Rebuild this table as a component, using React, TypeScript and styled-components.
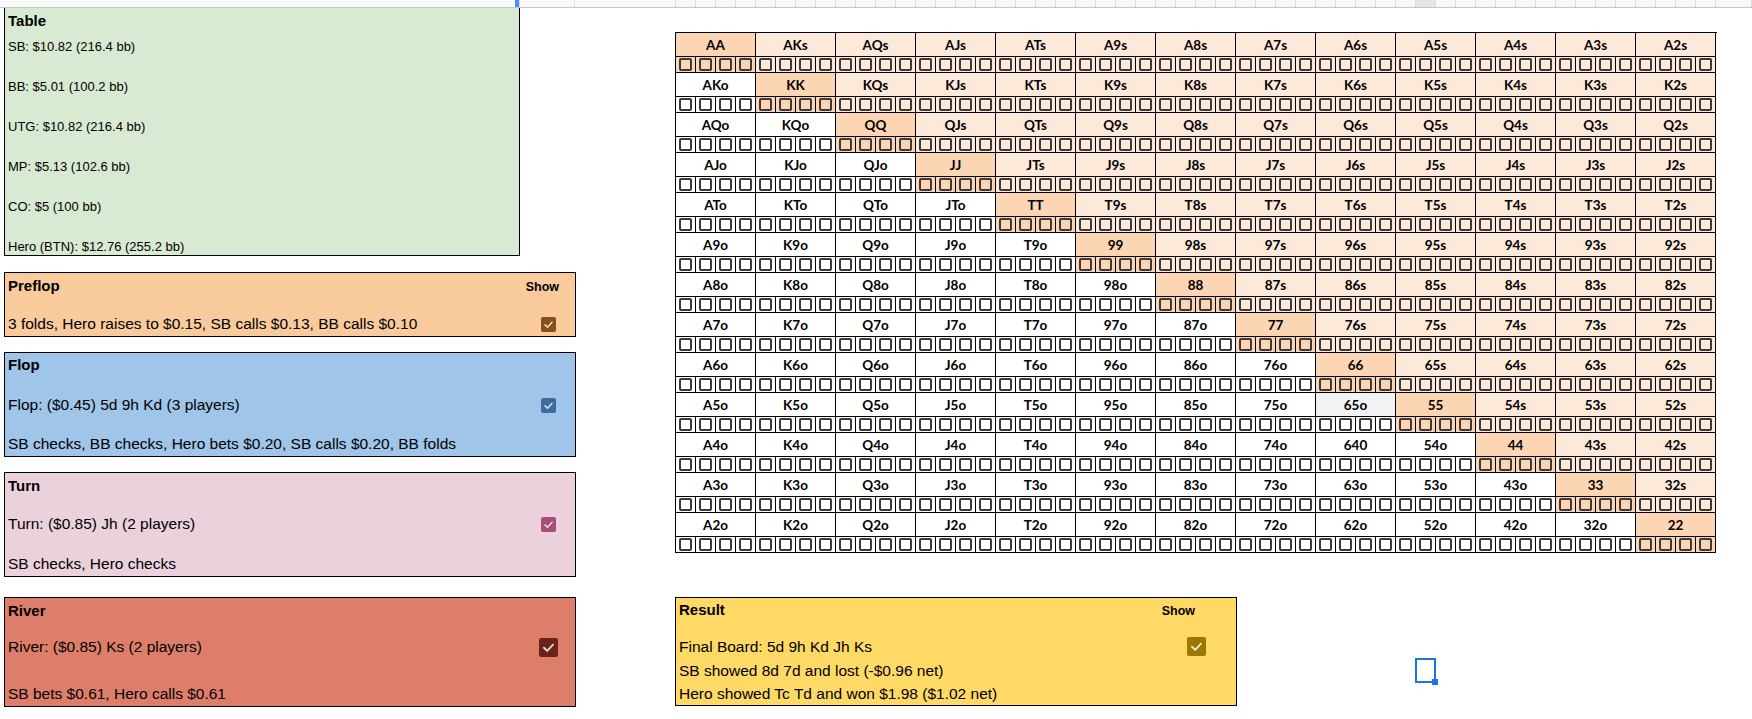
import React from "react";
import styled, { createGlobalStyle } from "styled-components";

const GlobalStyle = createGlobalStyle`
  html, body { margin: 0; padding: 0; background: #fff; overflow: hidden; }
  body { font-family: "Liberation Sans", Arial, sans-serif; color: #000; }
  #root { width: 1752px; height: 719px; }
`;

const Page = styled.div`
  width: 1752px;
  height: 719px;
  position: relative;
  overflow: hidden;
`;

/* ---------- column header strip ---------- */
const HeaderStrip = styled.div`
  display: flex;
  height: 7px;
  background: #f8f9fa;
  border-bottom: 1px solid #c4c7c5;
`;

const HeadCell = styled.div<{ $w?: number; $active?: boolean; $marker?: boolean }>`
  flex: ${(p) => (p.$w ? `0 0 ${p.$w}px` : "1 1 auto")};
  box-sizing: border-box;
  border-right: 1px solid #dadce0;
  background: ${(p) => (p.$active ? "#e3e5e8" : "transparent")};
  position: relative;
  &::after {
    content: "";
    display: ${(p) => (p.$marker ? "block" : "none")};
    position: absolute;
    right: 0;
    top: 0;
    bottom: 0;
    width: 4px;
    background: #4d8ef7;
  }
`;

/* ---------- sheet body ---------- */
const SheetBody = styled.div`
  display: flex;
  align-items: flex-start;
`;

const LeftCol = styled.div`
  display: flex;
  flex-direction: column;
  padding-left: 4px;
`;

const RightCol = styled.div`
  display: flex;
  flex-direction: column;
  margin-left: 99px;
  margin-top: 24px;
`;

const Panel = styled.div<{ $bg: string; $w: number; $h: number; $mt?: number; $noTop?: boolean }>`
  box-sizing: border-box;
  width: ${(p) => p.$w}px;
  height: ${(p) => p.$h}px;
  margin-top: ${(p) => p.$mt ?? 0}px;
  background: ${(p) => p.$bg};
  border: 1px solid #000;
  border-top: ${(p) => (p.$noTop ? "none" : "1px solid #000")};
  display: flex;
  flex-direction: column;
  padding-left: 3px;
`;

const Row = styled.div<{ $h: number; $mt?: number }>`
  display: flex;
  align-items: center;
  justify-content: space-between;
  height: ${(p) => p.$h}px;
  margin-top: ${(p) => p.$mt ?? 0}px;
  flex: 0 0 auto;
`;

const Title = styled.span`
  font-weight: bold;
  font-size: 15px;
`;

const BodyText = styled.span`
  font-size: 15.5px;
  white-space: nowrap;
`;

const SmallLine = styled.div<{ $mt: number }>`
  font-size: 13px;
  line-height: 15px;
  height: 15px;
  margin-top: ${(p) => p.$mt}px;
  white-space: nowrap;
`;

const ShowLabel = styled.span<{ $mr: number }>`
  font-weight: bold;
  font-size: 12.5px;
  margin-right: ${(p) => p.$mr}px;
  padding-top: 3px;
`;

const CheckBox = styled.span<{ $color: string; $size: number; $mr: number }>`
  display: inline-flex;
  align-items: center;
  justify-content: center;
  width: ${(p) => p.$size}px;
  height: ${(p) => p.$size}px;
  border-radius: 2px;
  background: ${(p) => p.$color};
  margin-right: ${(p) => p.$mr}px;
  flex: 0 0 auto;
`;

const Check: React.FC<{ color: string; size: number; mr: number }> = ({ color, size, mr }) => (
  <CheckBox $color={color} $size={size} $mr={mr}>
    <svg width={size} height={size} viewBox="0 0 16 16">
      <polyline
        points="4.2,8.2 6.9,10.9 11.8,5.6"
        fill="none"
        stroke="rgba(255,255,255,0.82)"
        strokeWidth="1.6"
        strokeLinecap="round"
        strokeLinejoin="round"
      />
    </svg>
  </CheckBox>
);

/* ---------- hand grid ---------- */
const HandGrid = styled.div`
  display: grid;
  grid-template-columns: repeat(13, 80px);
  border-left: 1px solid #000;
  border-top: 1px solid #000;
  width: 1041px;
`;

const HandCell = styled.div`
  box-sizing: border-box;
  width: 80px;
  height: 40px;
  border-right: 1px solid #000;
  border-bottom: 1px solid #000;
  display: flex;
  flex-direction: column;
`;

const HandLabel = styled.div<{ $bg: string }>`
  height: 23px;
  border-bottom: 1px solid #000;
  background: ${(p) => p.$bg};
  display: flex;
  align-items: center;
  justify-content: center;
  font-family: Lato, "Open Sans", sans-serif;
  font-weight: 700;
  font-size: 13.5px;
  color: #000;
`;

const CheckRow = styled.div<{ $bg: string }>`
  height: 15px;
  display: grid;
  grid-template-columns: 20px 20px 20px 19px;
  background: ${(p) => p.$bg};
`;

const Sub = styled.div<{ $last?: boolean }>`
  box-sizing: border-box;
  border-right: ${(p) => (p.$last ? "none" : "1px solid #000")};
  display: flex;
  align-items: center;
  justify-content: center;
`;

const Square = styled.span`
  box-sizing: border-box;
  width: 13px;
  height: 13px;
  border: 2px solid #3b3b3b;
  border-radius: 2px;
`;

const Selection = styled.div`
  position: absolute;
  left: 1415px;
  top: 658px;
  width: 21px;
  height: 25px;
  box-sizing: border-box;
  border: 2px solid #1a73e8;
  &::after {
    content: "";
    position: absolute;
    right: -4px;
    bottom: -4px;
    width: 6px;
    height: 6px;
    background: #1a73e8;
  }
`;

const RANKS = "AKQJT98765432".split("");
const PAIR = "#fcd5b4";
const SUITED = "#fde9d9";

type Hand = { label: string; bg: string; rowBg: string };

const hands: Hand[] = [];
RANKS.forEach((ri, i) => {
  RANKS.forEach((rj, j) => {
    let label: string;
    let bg: string;
    let rowBg: string;
    if (i === j) {
      label = ri + rj;
      bg = PAIR;
      rowBg = PAIR;
    } else if (j > i) {
      label = ri + rj + "s";
      bg = SUITED;
      rowBg = SUITED;
    } else {
      label = rj + ri + "o";
      bg = "#ffffff";
      rowBg = "#ffffff";
    }
    if (label === "64o") label = "640";
    if (label === "65o") bg = "#f2f2f2";
    hands.push({ label, bg, rowBg });
  });
});

const headCells: number[] = Array.from({ length: 52 }, (_, k) => k);

export default function App() {
  return (
    <Page>
      <GlobalStyle />
      <HeaderStrip>
        <HeadCell $w={520} $marker />
        <HeadCell $w={55} />
        <HeadCell $w={101} />
        {headCells.map((k) => (
          <HeadCell key={k} $w={20} $active={k === 37} />
        ))}
        <HeadCell />
      </HeaderStrip>

      <SheetBody>
        <LeftCol>
          <Panel $bg="#d9ead3" $w={516} $h={248} $noTop>
            <Row $h={24}>
              <Title>Table</Title>
            </Row>
            <SmallLine $mt={7}>SB: $10.82 (216.4 bb)</SmallLine>
            <SmallLine $mt={25}>BB: $5.01 (100.2 bb)</SmallLine>
            <SmallLine $mt={25}>UTG: $10.82 (216.4 bb)</SmallLine>
            <SmallLine $mt={25}>MP: $5.13 (102.6 bb)</SmallLine>
            <SmallLine $mt={25}>CO: $5 (100 bb)</SmallLine>
            <SmallLine $mt={25}>Hero (BTN): $12.76 (255.2 bb)</SmallLine>
          </Panel>

          <Panel $bg="#f9cb9c" $w={572} $h={65} $mt={16}>
            <Row $h={24}>
              <Title>Preflop</Title>
              <ShowLabel $mr={16}>Show</ShowLabel>
            </Row>
            <Row $h={24} $mt={15}>
              <BodyText>3 folds, Hero raises to $0.15, SB calls $0.13, BB calls $0.10</BodyText>
              <Check color="#8a4f17" size={15} mr={19} />
            </Row>
          </Panel>

          <Panel $bg="#9fc5e8" $w={572} $h={105} $mt={15}>
            <Row $h={22}>
              <Title>Flop</Title>
            </Row>
            <Row $h={24} $mt={18}>
              <BodyText>Flop: ($0.45) 5d 9h Kd (3 players)</BodyText>
              <Check color="#3c6aa1" size={15} mr={19} />
            </Row>
            <Row $h={24} $mt={15}>
              <BodyText>SB checks, BB checks, Hero bets $0.20, SB calls $0.20, BB folds</BodyText>
            </Row>
          </Panel>

          <Panel $bg="#ead1dc" $w={572} $h={105} $mt={15}>
            <Row $h={24}>
              <Title>Turn</Title>
            </Row>
            <Row $h={24} $mt={15}>
              <BodyText>Turn: ($0.85) Jh (2 players)</BodyText>
              <Check color="#a64d79" size={15} mr={19} />
            </Row>
            <Row $h={24} $mt={16}>
              <BodyText>SB checks, Hero checks</BodyText>
            </Row>
          </Panel>

          <Panel $bg="#dd7e6b" $w={572} $h={110} $mt={20}>
            <Row $h={24}>
              <Title>River</Title>
            </Row>
            <Row $h={24} $mt={13}>
              <BodyText>River: ($0.85) Ks (2 players)</BodyText>
              <Check color="#69231a" size={19} mr={17} />
            </Row>
            <Row $h={24} $mt={23}>
              <BodyText>SB bets $0.61, Hero calls $0.61</BodyText>
            </Row>
          </Panel>
        </LeftCol>

        <RightCol>
          <HandGrid>
            {hands.map((h) => (
              <HandCell key={h.label}>
                <HandLabel $bg={h.bg}>{h.label}</HandLabel>
                <CheckRow $bg={h.rowBg}>
                  <Sub><Square /></Sub>
                  <Sub><Square /></Sub>
                  <Sub><Square /></Sub>
                  <Sub $last><Square /></Sub>
                </CheckRow>
              </HandCell>
            ))}
          </HandGrid>

          <Panel $bg="#ffd966" $w={562} $h={109} $mt={44}>
            <Row $h={22}>
              <Title>Result</Title>
              <ShowLabel $mr={41}>Show</ShowLabel>
            </Row>
            <Row $h={23} $mt={15}>
              <BodyText>Final Board: 5d 9h Kd Jh Ks</BodyText>
              <Check color="#9a7900" size={19} mr={30} />
            </Row>
            <Row $h={23} $mt={1}>
              <BodyText>SB showed 8d 7d and lost (-$0.96 net)</BodyText>
            </Row>
            <Row $h={23}>
              <BodyText>Hero showed Tc Td and won $1.98 ($1.02 net)</BodyText>
            </Row>
          </Panel>
        </RightCol>
      </SheetBody>

      <Selection />
    </Page>
  );
}
